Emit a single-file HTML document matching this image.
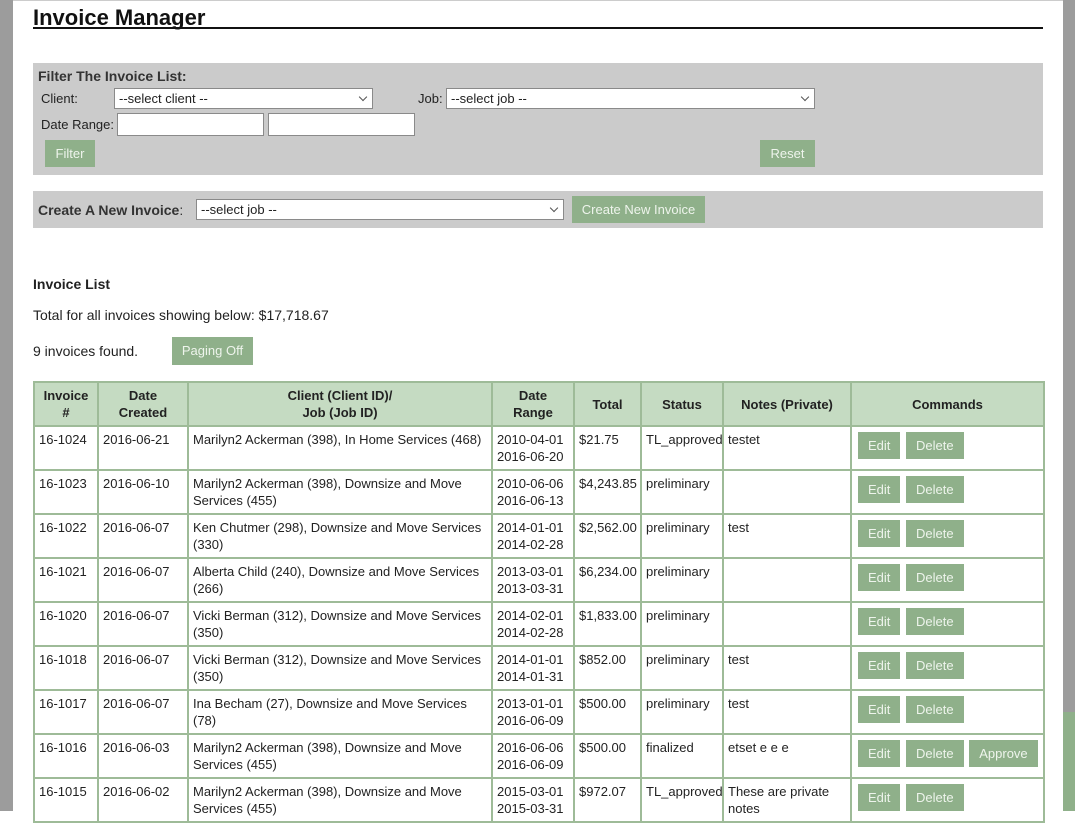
<!DOCTYPE html>
<html><head><style>
body{margin:0;width:1075px;height:811px;overflow:hidden;background:#fff;font-family:"Liberation Sans",Arial,sans-serif;font-size:13px;color:#222;position:relative}
.a{position:absolute}
.btn{position:absolute;background:#8fb08a;color:#eef4ec;font-size:13px;text-align:center;box-sizing:border-box}
.sel{position:absolute;background:#fff;border:1px solid #8a8a8a;box-sizing:border-box;font-size:13px;padding:2px 4px;color:#222}
.sel:after{content:"";position:absolute;right:6px;top:5px;width:5px;height:5px;border-right:1px solid #555;border-bottom:1px solid #555;transform:rotate(45deg)}
.inp{position:absolute;background:#fff;border:1px solid #8a8a8a;box-sizing:border-box}
table{position:absolute;left:33px;top:381px;border-collapse:collapse;width:1010px;table-layout:fixed}
td,th{border:2px solid #9ebb98;vertical-align:top;padding:4px 4px;font-size:13px;line-height:17px;text-align:left}
th{background:#c5dbc2;text-align:center;vertical-align:middle;font-weight:bold;padding:3px 4px}
tr.r td{height:34px}
td .b{display:inline-block;background:#8fb08a;color:#eef4ec;height:27px;line-height:27px;padding:0 10px;margin:1px 0 0 2px}
</style></head><body>
<div class="a" style="left:0;top:0;width:13px;height:811px;background:#9c9c9c"></div>
<div class="a" style="left:1063px;top:0;width:12px;height:811px;background:#9c9c9c"></div>
<div class="a" style="left:1063px;top:712px;width:12px;height:99px;background:#8fb08a"></div>
<div class="a" style="left:13px;top:0;width:1050px;height:1px;background:#ccc"></div>
<div class="a" style="left:33px;top:5px;font-size:22px;font-weight:bold;color:#111;text-decoration:underline">Invoice Manager</div>
<div class="a" style="left:33px;top:27px;width:1010px;height:2px;background:#111"></div>

<div class="a" style="left:33px;top:63px;width:1010px;height:112px;background:#cbcbcb"></div>
<div class="a" style="left:38px;top:68px;font-weight:bold;color:#333;font-size:14px">Filter The Invoice List:</div>
<div class="a" style="left:41px;top:91px">Client:</div>
<div class="sel" style="left:114px;top:88px;width:259px;height:21px">--select client --</div>
<div class="a" style="left:418px;top:91px">Job:</div>
<div class="sel" style="left:446px;top:88px;width:369px;height:21px">--select job --</div>
<div class="a" style="left:41px;top:117px">Date Range:</div>
<div class="inp" style="left:117px;top:113px;width:147px;height:23px"></div>
<div class="inp" style="left:268px;top:113px;width:147px;height:23px"></div>
<div class="btn" style="left:45px;top:140px;width:50px;height:27px;line-height:27px">Filter</div>
<div class="btn" style="left:760px;top:140px;width:55px;height:27px;line-height:27px">Reset</div>

<div class="a" style="left:33px;top:191px;width:1010px;height:37px;background:#cbcbcb"></div>
<div class="a" style="left:38px;top:202px;font-weight:bold;color:#333;font-size:14px">Create A New Invoice<span style="font-weight:normal">:</span></div>
<div class="sel" style="left:196px;top:199px;width:368px;height:21px">--select job --</div>
<div class="btn" style="left:572px;top:196px;width:133px;height:27px;line-height:27px">Create New Invoice</div>

<div class="a" style="left:33px;top:276px;font-weight:bold;font-size:14px">Invoice List</div>
<div class="a" style="left:33px;top:307px;font-size:14px">Total for all invoices showing below: $17,718.67</div>
<div class="a" style="left:33px;top:343px;font-size:14px">9 invoices found.</div>
<div class="btn" style="left:172px;top:337px;width:81px;height:28px;line-height:28px">Paging Off</div>

<table>
<colgroup><col style="width:64px"><col style="width:90px"><col style="width:304px"><col style="width:82px"><col style="width:67px"><col style="width:82px"><col style="width:128px"><col style="width:193px"></colgroup>
<tr style="height:44px"><th>Invoice<br>#</th><th>Date<br>Created</th><th>Client (Client ID)/<br>Job (Job ID)</th><th>Date<br>Range</th><th>Total</th><th>Status</th><th>Notes (Private)</th><th>Commands</th></tr>
<tr class="r"><td>16-1024</td><td>2016-06-21</td><td>Marilyn2 Ackerman (398), In Home Services (468)</td><td>2010-04-01<br>2016-06-20</td><td>$21.75</td><td>TL_approved</td><td>testet</td><td><span class="b">Edit</span> <span class="b">Delete</span></td></tr>
<tr class="r"><td>16-1023</td><td>2016-06-10</td><td>Marilyn2 Ackerman (398), Downsize and Move Services (455)</td><td>2010-06-06<br>2016-06-13</td><td>$4,243.85</td><td>preliminary</td><td></td><td><span class="b">Edit</span> <span class="b">Delete</span></td></tr>
<tr class="r"><td>16-1022</td><td>2016-06-07</td><td>Ken Chutmer (298), Downsize and Move Services (330)</td><td>2014-01-01<br>2014-02-28</td><td>$2,562.00</td><td>preliminary</td><td>test</td><td><span class="b">Edit</span> <span class="b">Delete</span></td></tr>
<tr class="r"><td>16-1021</td><td>2016-06-07</td><td>Alberta Child (240), Downsize and Move Services (266)</td><td>2013-03-01<br>2013-03-31</td><td>$6,234.00</td><td>preliminary</td><td></td><td><span class="b">Edit</span> <span class="b">Delete</span></td></tr>
<tr class="r"><td>16-1020</td><td>2016-06-07</td><td>Vicki Berman (312), Downsize and Move Services (350)</td><td>2014-02-01<br>2014-02-28</td><td>$1,833.00</td><td>preliminary</td><td></td><td><span class="b">Edit</span> <span class="b">Delete</span></td></tr>
<tr class="r"><td>16-1018</td><td>2016-06-07</td><td>Vicki Berman (312), Downsize and Move Services (350)</td><td>2014-01-01<br>2014-01-31</td><td>$852.00</td><td>preliminary</td><td>test</td><td><span class="b">Edit</span> <span class="b">Delete</span></td></tr>
<tr class="r"><td>16-1017</td><td>2016-06-07</td><td>Ina Becham (27), Downsize and Move Services (78)</td><td>2013-01-01<br>2016-06-09</td><td>$500.00</td><td>preliminary</td><td>test</td><td><span class="b">Edit</span> <span class="b">Delete</span></td></tr>
<tr class="r"><td>16-1016</td><td>2016-06-03</td><td>Marilyn2 Ackerman (398), Downsize and Move Services (455)</td><td>2016-06-06<br>2016-06-09</td><td>$500.00</td><td>finalized</td><td>etset e e e</td><td><span class="b">Edit</span> <span class="b">Delete</span> <span class="b">Approve</span></td></tr>
<tr class="r"><td>16-1015</td><td>2016-06-02</td><td>Marilyn2 Ackerman (398), Downsize and Move Services (455)</td><td>2015-03-01<br>2015-03-31</td><td>$972.07</td><td>TL_approved</td><td>These are private notes</td><td><span class="b">Edit</span> <span class="b">Delete</span></td></tr>
</table>
</body></html>
